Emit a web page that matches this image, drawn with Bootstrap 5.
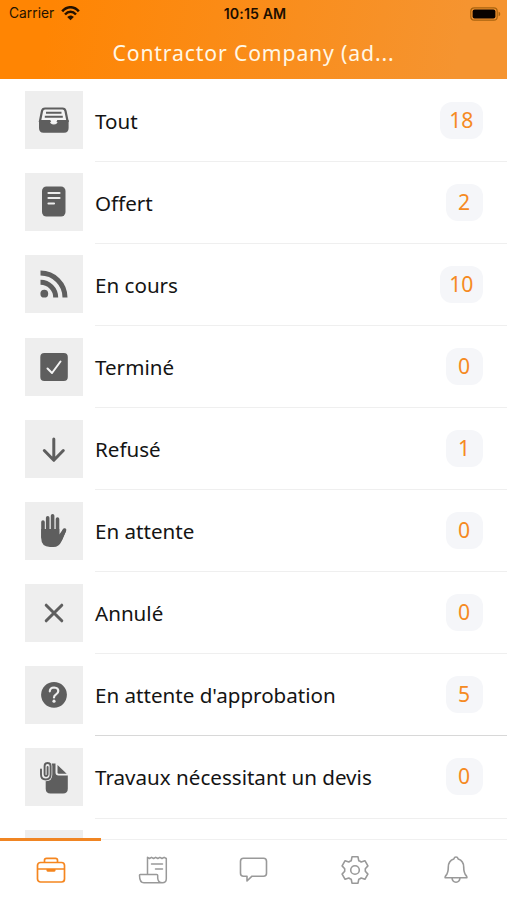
<!DOCTYPE html>
<html lang="fr">
<head>
<meta charset="utf-8">
<meta name="viewport" content="width=device-width, initial-scale=1">
<title>Contractor Company</title>
<link href="https://cdn.jsdelivr.net/npm/bootstrap@5.3.0/dist/css/bootstrap.min.css" rel="stylesheet">
<style>
body{font-family:"Noto Sans",sans-serif;color:#111;background:#fff}
.screen{height:900px}
.topbar{height:79px;background:linear-gradient(100deg,#ff8503 10%,#f59430 90%)}
.statusbar{height:27px;font-family:Inter,sans-serif;font-size:13.8px;color:#241200;padding:0 6px 0 9px}
.wifi{margin-left:7px}
.clock{font-weight:600;font-size:14.2px;letter-spacing:.1px;color:#1c0e00}
.title{font-size:21.2px;line-height:30px;letter-spacing:.85px;color:#fff7e6;padding-top:11px}
.jobs{flex:1 1 0;min-height:0;padding-top:.8px}
.job{height:82.08px;padding-left:25px}
.tile{width:58px;height:58px;background:#eee;color:#5e5e5e;margin-top:11.5px;margin-right:12px}
.tile svg{display:block}
.line{border-bottom:1.5px solid #efefef;padding-right:24.5px}
.line.strong{border-bottom:1px solid #d8d8d8}
.label{font-size:20.6px;line-height:28px;color:#141414;padding-top:1px}
.count{height:37px;padding:0 9px;border-radius:12px;background:#f5f6f9;color:#f58a22;font-size:21.2px;line-height:35px;min-width:37px}
.tabs{height:61.5px;border-top:1px solid #f0f0f0;background:#fff;color:#999}
.tab{color:#999;border-top:3px solid transparent;margin-top:-1.5px}
.tab.current{color:#f5861f;border-top-color:#f08523}
.tab svg{margin-top:-1px}
</style>
</head>
<body>
<div class="screen d-flex flex-column overflow-hidden">
<header class="topbar flex-shrink-0">
  <div class="statusbar row g-0 align-items-center">
    <div class="col d-flex align-items-center">Carrier
      <svg class="wifi" width="19" height="15" viewBox="0 0 19 15" fill="none" stroke="currentColor" stroke-width="2.5"><path d="M1.2 5.4C6-.2 13-.2 17.8 5.4M4 8.5c3.4-3.6 7.6-3.6 11 0"/><path d="M6.2 11c2-2 4.600-2 6.600 0L9.500 14.200z" fill="currentColor" stroke="none"/></svg>
    </div>
    <div class="col-auto clock">10:15 AM</div>
    <div class="col d-flex justify-content-end">
      <svg width="31" height="14" viewBox="0 0 31 14"><rect x=".8" y=".8" width="26.400" height="12.400" rx="3.500" fill="none" stroke="#a8630f" stroke-width="1.200"/><rect x="2.600" y="2.600" width="22.800" height="8.800" rx="2" fill="#080300"/><path d="M28.600 4.800v4.400q1.700-.5 1.700-2.200t-1.700-2.200z" fill="#a8630f"/></svg>
    </div>
  </div>
  <div class="title text-center">Contractor Company (ad...</div>
</header>

<main class="jobs overflow-hidden">
  <div class="job d-flex">
    <div class="tile flex-shrink-0"><svg viewBox="0 0 58 58"><path d="M20 17.500h17.500q2.500 0 3 2.500l2 10H15l2-10q.5-2.500 3-2.500z" fill="#f4f4f4" stroke="currentColor" stroke-width="2.200"/><path d="M21 21.800h15.500M19.800 25.800h18" stroke="currentColor" stroke-width="1.900"/><path d="M14 29h10.500q.5 4.500 4.300 4.500t4.300-4.500h10.500v8q0 4.800-4.500 4.800H18.500Q14 41.800 14 37z" fill="currentColor"/><path d="M25.300 28.400h7q-.3 3.600-3.500 3.600t-3.500-3.600z" fill="#f4f4f4"/></svg></div>
    <div class="line flex-grow-1 d-flex align-items-center justify-content-between"><span class="label">Tout</span><span class="count text-center">18</span></div>
  </div>
  <div class="job d-flex">
    <div class="tile flex-shrink-0"><svg viewBox="0 0 58 58"><rect x="17" y="13.500" width="23.500" height="30" rx="4.500" fill="currentColor"/><path d="M23.500 20h11M23.500 25h11M23.500 30.500h5.500" stroke="#eee" stroke-width="2.200" stroke-linecap="round"/></svg></div>
    <div class="line flex-grow-1 d-flex align-items-center justify-content-between"><span class="label">Offert</span><span class="count text-center">2</span></div>
  </div>
  <div class="job d-flex">
    <div class="tile flex-shrink-0"><svg viewBox="0 0 58 58"><circle cx="19.300" cy="38.700" r="3.900" fill="currentColor"/><path d="M15.500 27.300A15.200 15.200 0 0 1 30.700 42.500M15.500 18A24.500 24.500 0 0 1 40 42.500" fill="none" stroke="currentColor" stroke-width="5"/></svg></div>
    <div class="line flex-grow-1 d-flex align-items-center justify-content-between"><span class="label">En cours</span><span class="count text-center">10</span></div>
  </div>
  <div class="job d-flex">
    <div class="tile flex-shrink-0"><svg viewBox="0 0 58 58"><rect x="15.300" y="15" width="27.500" height="28" rx="4" fill="currentColor"/><path d="m22.500 30.500 4.500 4.500 8.500-11.500" fill="none" stroke="#f4f4f4" stroke-width="2" stroke-linecap="round" stroke-linejoin="round"/></svg></div>
    <div class="line flex-grow-1 d-flex align-items-center justify-content-between"><span class="label">Terminé</span><span class="count text-center">0</span></div>
  </div>
  <div class="job d-flex">
    <div class="tile flex-shrink-0"><svg viewBox="0 0 58 58"><path d="M28.800 19v21M19.300 30.500l9.500 9.800 9.500-9.800" fill="none" stroke="currentColor" stroke-width="3" stroke-linecap="round" stroke-linejoin="round"/></svg></div>
    <div class="line flex-grow-1 d-flex align-items-center justify-content-between"><span class="label">Refusé</span><span class="count text-center">1</span></div>
  </div>
  <div class="job d-flex">
    <div class="tile flex-shrink-0"><svg viewBox="0 0 58 58"><path d="M18 20v15M22.700 15.800V32M27.600 13.800V32M32.500 17v15M39.500 28l-4 9" fill="none" stroke="currentColor" stroke-width="3.600" stroke-linecap="round"/><path d="M16.200 27h18.100v5.500l3.600-5 3.300 1.200-4.500 10.300q-2.700 6-8.200 6h-3.500q-8.800-.3-8.800-9z" fill="currentColor"/></svg></div>
    <div class="line flex-grow-1 d-flex align-items-center justify-content-between"><span class="label">En attente</span><span class="count text-center">0</span></div>
  </div>
  <div class="job d-flex">
    <div class="tile flex-shrink-0"><svg viewBox="0 0 58 58"><path d="m21.200 21.200 15.600 15.600m0-15.600L21.200 36.800" fill="none" stroke="currentColor" stroke-width="3" stroke-linecap="round"/></svg></div>
    <div class="line flex-grow-1 d-flex align-items-center justify-content-between"><span class="label">Annulé</span><span class="count text-center">0</span></div>
  </div>
  <div class="job d-flex">
    <div class="tile flex-shrink-0"><svg viewBox="0 0 58 58"><circle cx="29" cy="28.800" r="12.900" fill="currentColor"/><path d="M24.800 25.300q.2-3.800 4.300-3.800 4.200.2 4.200 3.600 0 2-2.200 3.300-2.100 1.200-2.100 3" fill="none" stroke="#eee" stroke-width="2.200" stroke-linecap="round"/><circle cx="29" cy="35.200" r="1.600" fill="#eee"/></svg></div>
    <div class="line strong flex-grow-1 d-flex align-items-center justify-content-between"><span class="label">En attente d'approbation</span><span class="count text-center">5</span></div>
  </div>
  <div class="job d-flex">
    <div class="tile flex-shrink-0"><svg viewBox="0 0 58 58"><path d="M26 15.500h4.500v9q0 3 3 3h9.300v13.200q0 4.800-4.800 4.800H25.500q-4.800 0-4.800-4.800V30q5.300-.5 5.300-6z" fill="currentColor"/><path d="M32.500 17v7.500q0 1.300 1.300 1.300h7.900z" fill="currentColor"/><path d="M16 21.500v5q0 5 4.800 5t4.800-5V18q0-3-3-3t-3 3v8.500q0 1.500 1.500 1.500t1.500-1.500V19" fill="none" stroke="#eee" stroke-width="3.400"/><path d="M16 21.500v5q0 5 4.800 5t4.800-5V18q0-3-3-3t-3 3v8.500q0 1.500 1.500 1.500t1.500-1.500V19" fill="none" stroke="currentColor" stroke-width="1.900" stroke-linecap="round"/></svg></div>
    <div class="line flex-grow-1 d-flex align-items-center justify-content-between"><span class="label">Travaux nécessitant un devis</span><span class="count text-center">0</span></div>
  </div>
  <div class="job d-flex"><div class="tile flex-shrink-0"></div></div>
</main>

<nav class="tabs d-flex flex-shrink-0" aria-label="Navigation">
  <a class="tab current col d-flex align-items-center justify-content-center" href="#" aria-label="Travaux"><svg width="32" height="32" viewBox="0 0 32 32" fill="none" stroke="currentColor" stroke-width="1.700"><rect x="2.500" y="8.500" width="27" height="19.500" rx="3"/><path d="M9.500 8.500V6.300q0-2 2-2h9q2 0 2 2v2.200M2.500 15h27"/><path d="M11.500 15h9v1.200q0 1.500-1.500 1.500h-6q-1.500 0-1.500-1.500z" fill="currentColor" stroke="none"/></svg></a>
  <a class="tab col d-flex align-items-center justify-content-center" href="#" aria-label="Factures"><svg width="32" height="32" viewBox="0 0 32 32" fill="none" stroke="currentColor" stroke-width="1.500" stroke-linejoin="round"><path d="M10.500 20.500V3.300l2 1.200 2-1.200 2.100 1.200 2.100-1.200 2.100 1.200 2.100-1.200 2.100 1.200 2.100-1.200 2.200 1.200v20.300q0 4-4 4M10.500 20.500H3.200q-.7 0-.7.7 0 7.600 4.500 7.600h18.300q-4.300 0-4.600-4.800v-2.500q0-1-1-1z" transform="translate(1)"/><path d="M15.500 10h11M19.500 15h7" stroke-linecap="round"/></svg></a>
  <a class="tab col d-flex align-items-center justify-content-center" href="#" aria-label="Messages"><svg width="32" height="32" viewBox="0 0 32 32" fill="none" stroke="currentColor" stroke-width="1.600" stroke-linejoin="round"><path d="M5.500 4.200h20q3 0 3 3v12q0 3-3 3H14l-5 4.800v-4.800H5.500q-3 0-3-3v-12q0-3 3-3z"/></svg></a>
  <a class="tab col d-flex align-items-center justify-content-center" href="#" aria-label="Réglages"><svg width="32" height="32" viewBox="0 0 32 32" fill="none" stroke="currentColor" stroke-width="1.600" stroke-linejoin="round"><circle cx="16" cy="16" r="4.300"/><path d="M13 2.800h6l.8 4q1.300.4 2.400 1.200l3.700-1.300 3 5.200-2.600 2.800v2.600l2.600 2.800-3 5.200-3.700-1.300q-1.100.8-2.400 1.200l-.8 4h-6l-.8-4q-1.300-.4-2.400-1.200l-3.700 1.300-3-5.200 2.600-2.800v-2.600l-2.600-2.800 3-5.200L9.800 8q1.100-.8 2.400-1.200z"/></svg></a>
  <a class="tab col d-flex align-items-center justify-content-center" href="#" aria-label="Notifications"><svg width="32" height="32" viewBox="0 0 32 32" fill="none" stroke="currentColor" stroke-width="1.600" stroke-linejoin="round"><path d="M16 3q-1.600 0-2.200 1.900Q8.300 6.800 8.300 13q0 6-2.500 8.600-.7.800-.7 2.100h21.800q0-1.300-.7-2.100Q23.700 19 23.700 13q0-6.200-5.500-8.100Q17.600 3 16 3zM12 23.800q.3 4.400 4 4.400t4-4.400"/></svg></a>
</nav>
</div>
<script src="https://cdn.jsdelivr.net/npm/bootstrap@5.3.0/dist/js/bootstrap.bundle.min.js"></script>
</body>
</html>
